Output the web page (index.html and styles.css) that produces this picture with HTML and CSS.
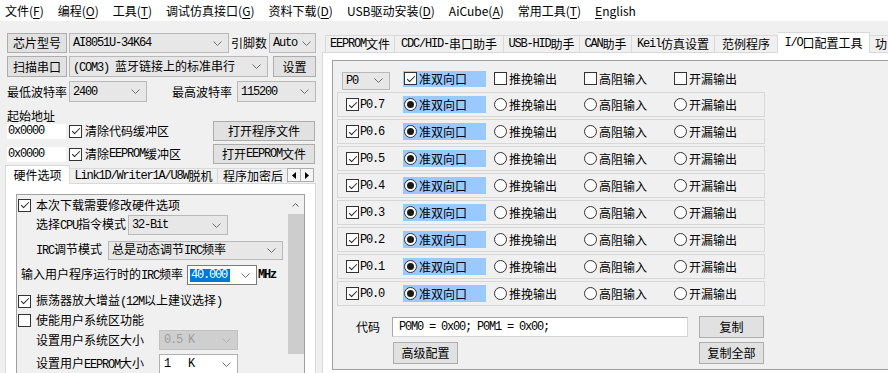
FILE: index.html
```html
<!DOCTYPE html>
<html lang="zh-CN">
<head>
<meta charset="utf-8">
<title>AiISP</title>
<link rel="stylesheet" href="styles.css">
</head>
<body>
<div class="menubar">
  <span class="mi">文件(<u>F</u>)</span>
  <span class="mi">编程(<u>O</u>)</span>
  <span class="mi">工具(<u>T</u>)</span>
  <span class="mi">调试仿真接口(<u>G</u>)</span>
  <span class="mi">资料下载(<u>D</u>)</span>
  <span class="mi">USB驱动安装(<u>D</u>)</span>
  <span class="mi">AiCube(<u>A</u>)</span>
  <span class="mi">常用工具(<u>T</u>)</span>
  <span class="mi"><u>E</u>nglish</span>
</div>
<div class="main">
  <div class="left">
    <div class="lrow r1">
      <div class="btn b-chip">芯片型号</div>
      <div class="combo c-chip"><span class="m">AI8051U-34K64</span><svg class="chev" width="9" height="5" viewBox="0 0 9 5"><path d="M.5 .5 4.5 4.5 8.5 .5" fill="none" stroke="#707070"/></svg></div>
      <span class="lbl l-pin">引脚数</span>
      <div class="combo c-auto"><span class="m">Auto</span><svg class="chev" width="9" height="5" viewBox="0 0 9 5"><path d="M.5 .5 4.5 4.5 8.5 .5" fill="none" stroke="#707070"/></svg></div>
    </div>
    <div class="lrow r2">
      <div class="btn b-chip">扫描串口</div>
      <div class="combo c-com"><span><span class="m">(COM3) </span>蓝牙链接上的标准串行</span><svg class="chev" width="9" height="5" viewBox="0 0 9 5"><path d="M.5 .5 4.5 4.5 8.5 .5" fill="none" stroke="#707070"/></svg></div>
      <div class="btn b-set">设置</div>
    </div>
    <div class="lrow r3">
      <span class="lbl l-baud">最低波特率</span>
      <div class="combo c-min"><span class="m">2400</span><svg class="chev" width="9" height="5" viewBox="0 0 9 5"><path d="M.5 .5 4.5 4.5 8.5 .5" fill="none" stroke="#707070"/></svg></div>
      <span class="lbl l-baud2">最高波特率</span>
      <div class="combo c-max"><span class="m">115200</span><svg class="chev" width="9" height="5" viewBox="0 0 9 5"><path d="M.5 .5 4.5 4.5 8.5 .5" fill="none" stroke="#707070"/></svg></div>
    </div>
    <div class="addr-label">起始地址</div>
    <div class="lrow a1">
      <div class="addr"><span class="m">0x0000</span></div>
      <div class="chk"><span class="cb on"></span>清除代码缓冲区</div>
      <div class="btn b-open">打开程序文件</div>
    </div>
    <div class="lrow a2">
      <div class="addr"><span class="m">0x0000</span></div>
      <div class="chk"><span class="cb on"></span>清除<span class="m">EEPROM</span>缓冲区</div>
      <div class="btn b-open">打开<span class="m">EEPROM</span>文件</div>
    </div>
    <div class="ltabs">
      <div class="ltab on">硬件选项</div>
      <div class="ltab lt-link"><span class="m">Link1D/Writer1A/U8W</span>脱机</div>
      <div class="ltab lt-enc">程序加密后</div>
      <div class="tscroll">
        <span class="tsb"><svg width="4" height="7" viewBox="0 0 4 7"><polygon points="4,0 0,3.5 4,7" fill="#000"/></svg></span>
        <span class="tsb"><svg width="4" height="7" viewBox="0 0 4 7"><polygon points="0,0 4,3.5 0,7" fill="#000"/></svg></span>
      </div>
    </div>
    <div class="lpanel">
      <div class="inner">
        <div class="icontent">
          <div class="ir ir1"><span class="cb on"></span><span class="cbt">本次下载需要修改硬件选项</span></div>
          <div class="ir ir2"><span class="lab w-cpu">选择<span class="m">CPU</span>指令模式</span><div class="combo c-bit"><span class="m">32-Bit</span><svg class="chev" width="9" height="5" viewBox="0 0 9 5"><path d="M.5 .5 4.5 4.5 8.5 .5" fill="none" stroke="#707070"/></svg></div></div>
          <div class="ir ir3"><span class="lab w-irc"><span class="m">IRC</span>调节模式</span><div class="combo c-irc"><span>总是动态调节<span class="m">IRC</span>频率</span><svg class="chev" width="9" height="5" viewBox="0 0 9 5"><path d="M.5 .5 4.5 4.5 8.5 .5" fill="none" stroke="#707070"/></svg></div></div>
          <div class="ir ir4"><span class="lab w-freq">输入用户程序运行时的<span class="m">IRC</span>频率</span><div class="combo c-freq"><span class="m hlsel">40.000</span><svg class="chev" width="9" height="5" viewBox="0 0 9 5"><path d="M.5 .5 4.5 4.5 8.5 .5" fill="none" stroke="#707070"/></svg></div><span class="m mhz">MHz</span></div>
          <div class="ir ir5"><span class="cb on"></span><span class="cbt">振荡器放大增益<span class="m">(12M</span>以上建议选择<span class="m">)</span></span></div>
          <div class="ir ir6"><span class="cb"></span><span class="cbt">使能用户系统区功能</span></div>
          <div class="ir ir7"><span class="lab w-size">设置用户系统区大小</span><div class="combo c-size dis"><span class="m">0.5 K</span><svg class="chev" width="9" height="5" viewBox="0 0 9 5"><path d="M.5 .5 4.5 4.5 8.5 .5" fill="none" stroke="#b0b0b0"/></svg></div></div>
          <div class="ir ir8"><span class="lab w-size">设置用户<span class="m">EEPROM</span>大小</span><div class="combo c-size wht"><span class="m">1   K</span><svg class="chev" width="9" height="5" viewBox="0 0 9 5"><path d="M.5 .5 4.5 4.5 8.5 .5" fill="none" stroke="#707070"/></svg></div></div>
        </div>
        <div class="vscroll">
          <div class="sarrow"><svg width="7" height="4" viewBox="0 0 7 4"><path d="M.5 3.5 3.5 .5 6.5 3.5" fill="none" stroke="#606060"/></svg></div>
          <div class="thumb"></div>
        </div>
      </div>
    </div>
  </div>

  <div class="right">
    <div class="rtabs">
      <div class="tab t1"><span class="m">EEPROM</span>文件</div>
      <div class="tab t2"><span class="m">CDC/HID-</span>串口助手</div>
      <div class="tab t3"><span class="m">USB-HID</span>助手</div>
      <div class="tab t4"><span class="m">CAN</span>助手</div>
      <div class="tab t5"><span class="m">Keil</span>仿真设置</div>
      <div class="tab t6">范例程序</div>
      <div class="tab t7 on"><span class="m">I/O</span>口配置工具</div>
      <div class="tab t8">功</div>
    </div>
    <div class="rpanel">
      <div class="group">
        <div class="prow hdr">
          <div class="lead"><div class="combo c-p0"><span class="m">P0</span><svg class="chev" width="9" height="5" viewBox="0 0 9 5"><path d="M.5 .5 4.5 4.5 8.5 .5" fill="none" stroke="#707070"/></svg></div></div>
          <div class="opt sel"><span class="it"><span class="cb on"></span>准双向口</span></div>
          <div class="opt"><span class="it"><span class="cb"></span>推挽输出</span></div>
          <div class="opt"><span class="it"><span class="cb"></span>高阻输入</span></div>
          <div class="opt"><span class="it"><span class="cb"></span>开漏输出</span></div>
        </div>
        <div class="prow box">
          <div class="lead"><span class="cb on"></span><span class="m pn">P0.7</span></div>
          <div class="opt sel"><span class="it"><span class="rd on"></span>准双向口</span></div>
          <div class="opt"><span class="it"><span class="rd"></span>推挽输出</span></div>
          <div class="opt"><span class="it"><span class="rd"></span>高阻输入</span></div>
          <div class="opt"><span class="it"><span class="rd"></span>开漏输出</span></div>
        </div>
        <div class="prow box">
          <div class="lead"><span class="cb on"></span><span class="m pn">P0.6</span></div>
          <div class="opt sel"><span class="it"><span class="rd on"></span>准双向口</span></div>
          <div class="opt"><span class="it"><span class="rd"></span>推挽输出</span></div>
          <div class="opt"><span class="it"><span class="rd"></span>高阻输入</span></div>
          <div class="opt"><span class="it"><span class="rd"></span>开漏输出</span></div>
        </div>
        <div class="prow box">
          <div class="lead"><span class="cb on"></span><span class="m pn">P0.5</span></div>
          <div class="opt sel"><span class="it"><span class="rd on"></span>准双向口</span></div>
          <div class="opt"><span class="it"><span class="rd"></span>推挽输出</span></div>
          <div class="opt"><span class="it"><span class="rd"></span>高阻输入</span></div>
          <div class="opt"><span class="it"><span class="rd"></span>开漏输出</span></div>
        </div>
        <div class="prow box">
          <div class="lead"><span class="cb on"></span><span class="m pn">P0.4</span></div>
          <div class="opt sel"><span class="it"><span class="rd on"></span>准双向口</span></div>
          <div class="opt"><span class="it"><span class="rd"></span>推挽输出</span></div>
          <div class="opt"><span class="it"><span class="rd"></span>高阻输入</span></div>
          <div class="opt"><span class="it"><span class="rd"></span>开漏输出</span></div>
        </div>
        <div class="prow box">
          <div class="lead"><span class="cb on"></span><span class="m pn">P0.3</span></div>
          <div class="opt sel"><span class="it"><span class="rd on"></span>准双向口</span></div>
          <div class="opt"><span class="it"><span class="rd"></span>推挽输出</span></div>
          <div class="opt"><span class="it"><span class="rd"></span>高阻输入</span></div>
          <div class="opt"><span class="it"><span class="rd"></span>开漏输出</span></div>
        </div>
        <div class="prow box">
          <div class="lead"><span class="cb on"></span><span class="m pn">P0.2</span></div>
          <div class="opt sel"><span class="it"><span class="rd on"></span>准双向口</span></div>
          <div class="opt"><span class="it"><span class="rd"></span>推挽输出</span></div>
          <div class="opt"><span class="it"><span class="rd"></span>高阻输入</span></div>
          <div class="opt"><span class="it"><span class="rd"></span>开漏输出</span></div>
        </div>
        <div class="prow box">
          <div class="lead"><span class="cb on"></span><span class="m pn">P0.1</span></div>
          <div class="opt sel"><span class="it"><span class="rd on"></span>准双向口</span></div>
          <div class="opt"><span class="it"><span class="rd"></span>推挽输出</span></div>
          <div class="opt"><span class="it"><span class="rd"></span>高阻输入</span></div>
          <div class="opt"><span class="it"><span class="rd"></span>开漏输出</span></div>
        </div>
        <div class="prow box">
          <div class="lead"><span class="cb on"></span><span class="m pn">P0.0</span></div>
          <div class="opt sel"><span class="it"><span class="rd on"></span>准双向口</span></div>
          <div class="opt"><span class="it"><span class="rd"></span>推挽输出</span></div>
          <div class="opt"><span class="it"><span class="rd"></span>高阻输入</span></div>
          <div class="opt"><span class="it"><span class="rd"></span>开漏输出</span></div>
        </div>
        <div class="coderow">
          <span class="codelbl">代码</span>
          <div class="codein"><span class="m">P0M0 = 0x00; P0M1 = 0x00;</span></div>
          <span></span>
          <div class="btn b-copy">复制</div>
        </div>
        <div class="coderow2">
          <span></span>
          <div class="btn b-adv">高级配置</div>
          <span></span>
          <div class="btn b-copy2">复制全部</div>
        </div>
      </div>
    </div>
  </div>
</div>
</body>
</html>
```

FILE: styles.css
```css
* { box-sizing: border-box; }
html, body { margin: 0; padding: 0; }
body {
  width: 888px; height: 373px; overflow: hidden;
  background: #f0f0f0; color: #000;
  font-family: "Noto Sans CJK SC", "Noto Sans", sans-serif;
  font-size: 12px; line-height: 14px;
}
.m {
  font-family: "Liberation Mono", "DejaVu Sans Mono", monospace;
  font-size: 12px; letter-spacing: -1.2px; white-space: pre;
}
u { text-decoration: underline; text-underline-offset: 2px; }

/* menu */
.menubar { height: 21px; background: #fff; display: flex; align-items: center; padding-left: 5px; }
.mi { margin-right: 14px; white-space: nowrap; }

.main { display: flex; height: 352px; }

/* common controls */
.lrow { display: flex; align-items: center; }
.btn {
  display: flex; align-items: center; justify-content: center;
  background: #e1e1e1; border: 1px solid #adadad; white-space: nowrap; flex: none;
}
.combo {
  display: flex; align-items: center; justify-content: space-between;
  background: #e7e7e7; border: 1px solid #b9b9b9;
  padding: 0 6px 0 3px; white-space: nowrap; overflow: hidden; flex: none;
}
.chev { flex: none; }
.lbl { white-space: nowrap; flex: none; }
.cb { width: 13px; height: 13px; border: 1px solid #333; background: #fff; flex: none; position: relative; }
.cb.on::after {
  content: ""; position: absolute; left: 3.5px; top: 0.5px; width: 3px; height: 7px;
  border: solid #222; border-width: 0 1.4px 1.4px 0; transform: rotate(45deg);
}
.rd { width: 13px; height: 13px; border: 1px solid #333; border-radius: 50%; background: #fff; flex: none; position: relative; }
.rd.on::after {
  content: ""; position: absolute; left: 2px; top: 2px; width: 7px; height: 7px;
  border-radius: 50%; background: #1a1a1a;
}

/* left column */
.left { width: 320px; flex: none; padding: 12px 4px 0 7px; display: flex; flex-direction: column; }
.r1 { height: 20px; }
.r2 { height: 21px; margin-top: 3px; }
.r3 { height: 21px; margin-top: 4px; }
.b-chip { width: 60px; height: 20px; }
.r2 .b-chip { height: 21px; }
.c-chip { width: 160px; height: 20px; margin-left: 2px; }
.l-pin { margin-left: 2px; width: 36px; }
.c-auto { width: 47px; height: 20px; margin-left: 2px; padding-right: 4px; }
.c-com { width: 199px; height: 21px; margin-left: 2px; }
.b-set { width: 43px; height: 21px; margin-left: 5px; }
.l-baud { width: 60px; }
.c-min { width: 78px; height: 21px; margin-left: 2px; }
.l-baud2 { margin-left: 25px; width: 60px; }
.c-max { width: 79px; height: 21px; margin-left: 5px; }

.addr-label { height: 12px; margin-top: 7px; line-height: 14px; }
.a1 { height: 22px; }
.a2 { height: 21px; margin-top: 3px; }
.addr { width: 59px; height: 15px; background: #fff; display: flex; align-items: center; padding-left: 1px; flex: none; }
.chk { display: flex; align-items: center; white-space: nowrap; margin-left: 3px; }
.chk .cb { margin-right: 3px; }
.b-open { width: 102px; height: 20px; margin-left: auto; margin-right: 1px; }

.ltabs { display: flex; align-items: flex-end; height: 18px; margin-top: 1px; margin-left: -2px; position: relative; z-index: 1; }
.ltab {
  height: 15px; background: #f0f0f0; border: 1px solid #d9d9d9; border-bottom: none; border-left: none;
  display: flex; align-items: center; justify-content: center; white-space: nowrap; flex: none; overflow: hidden;
}
.ltab.on { width: 65px; height: 19px; background: #fff; border-left: 1px solid #d9d9d9; margin-bottom: -1px; }
.lt-link { width: 148px; }
.lt-enc { width: 70px; justify-content: flex-start; padding-left: 5px; }
.tscroll { display: flex; margin-bottom: 1px; }
.tsb {
  width: 14px; height: 14px; border: 1px solid #adadad; background: #f5f5f5;
  display: flex; align-items: center; justify-content: center; margin-left: -1px;
}
.lpanel {
  margin-left: -2px; width: 311px; flex: 1;
  background: #fff; border: 1px solid #d9d9d9; border-bottom: none; padding: 10px 10px 0;
}
.inner { height: 100%; border: 1px solid #a0a0a0; border-bottom: none; background: #f0f0f0; display: flex; }
.icontent { flex: 1; min-width: 0; }
.vscroll { width: 17px; flex: none; display: flex; flex-direction: column; align-items: center; }
.sarrow { height: 19px; width: 17px; display: flex; align-items: center; justify-content: center; }
.thumb { width: 16px; height: 140px; background: #cdcdcd; }

.ir { display: flex; align-items: center; white-space: nowrap; }
.ir .cb { margin-right: 5px; }
.lab { flex: none; white-space: nowrap; }
.ir1 { margin-top: 2px; height: 16px; padding-left: 1px; }
.ir2 { margin-top: 2px; height: 20px; padding-left: 19px; }
.ir3 { margin-top: 5px; height: 20px; padding-left: 19px; }
.ir4 { margin-top: 5px; height: 20px; padding-left: 4px; }
.ir5 { margin-top: 8px; height: 16px; padding-left: 1px; }
.ir6 { margin-top: 3px; height: 16px; padding-left: 1px; }
.ir7 { margin-top: 2px; height: 20px; padding-left: 19px; }
.ir8 { margin-top: 4px; height: 20px; padding-left: 19px; }
.w-cpu { width: 92px; }
.w-irc { width: 72px; }
.w-freq { width: 166px; }
.w-size { width: 123px; }
.c-bit { width: 100px; height: 20px; }
.c-irc { width: 175px; height: 19px; }
.c-freq { width: 70px; height: 20px; background: #fff; border-color: #7a7a7a; padding-left: 2px; }
.hlsel { background: #0078d7; color: #fff; padding: 0 3px 0 1px; line-height: 13px; }
.mhz { margin-left: 1px; font-weight: bold; }
.c-size { width: 79px; height: 20px; padding-left: 4px; }
.c-size.dis { background: #cfcfcf; border-color: #c2c2c2; color: #9d9d9d; }
.c-size.wht { background: #fff; border-color: #b0b0b0; }

/* right column */
.right { width: 568px; flex: none; overflow: hidden; padding-top: 11px; }
.rtabs { display: flex; align-items: flex-end; height: 20px; padding-left: 5px; position: relative; z-index: 1; }
.tab {
  height: 17px; border: 1px solid #d9d9d9; border-bottom: none; border-left: none;
  background: #f0f0f0; display: flex; align-items: center; justify-content: center;
  white-space: nowrap; flex: none; overflow: hidden;
}
.tab.on { height: 21px; background: #fff; margin-bottom: -1px; }
.t1 { width: 70px; border-left: 1px solid #d9d9d9; }
.t2 { width: 109px; }
.t3 { width: 76px; }
.t4 { width: 52px; }
.t5 { width: 83px; }
.t6 { width: 63px; }
.t7 { width: 92px; }
.t8 { width: 40px; justify-content: flex-start; padding-left: 5px; }

.rpanel {
  margin-left: 2px; width: 620px; height: 322px;
  background: #fff; border: 1px solid #d9d9d9; padding: 7px 0 0 9px;
}
.group { width: 600px; border: 1px solid #a0a0a0; background: #f0f0f0; padding: 6px 0 5px 4px; }

.prow { display: flex; align-items: center; width: 428px; border: 1px solid transparent; }
.hdr { height: 23px; }
.box { height: 25px; margin-top: 2px; border-color: #d7d7d7; }
.lead { width: 65px; flex: none; display: flex; align-items: center; height: 100%; }
.hdr .lead { padding-left: 4px; }
.box .lead { padding-left: 8px; }
.pn { margin-left: 1px; }
.c-p0 { width: 48px; height: 18px; margin-top: 4px; padding-left: 3px; }
.opt { width: 90px; flex: none; display: flex; align-items: center; }
.it { display: flex; align-items: center; height: 17px; padding-left: 1px; white-space: nowrap; }
.hdr .it { height: 16px; }
.it .cb, .it .rd { margin-right: 2px; }
.opt.sel .it { background: #99c9ff; width: 83px; }

.coderow { display: grid; grid-template-columns: 55px 296px 11px 65px; align-items: center; margin-top: 9px; height: 23px; }
.coderow2 { display: grid; grid-template-columns: 55px 296px 11px 65px; align-items: center; margin-top: 4px; height: 22px; }
.codelbl { padding-left: 19px; }
.codein {
  height: 20px; background: #fff; border: 1px solid #d4d4d4; border-top-color: #a8a8a8; border-left-color: #a8a8a8;
  display: flex; align-items: center; padding-left: 6px;
}
.b-copy { height: 22px; width: 65px; }
.b-adv { height: 22px; width: 65px; margin-left: 1px; }
.b-copy2 { height: 22px; width: 65px; }
```
